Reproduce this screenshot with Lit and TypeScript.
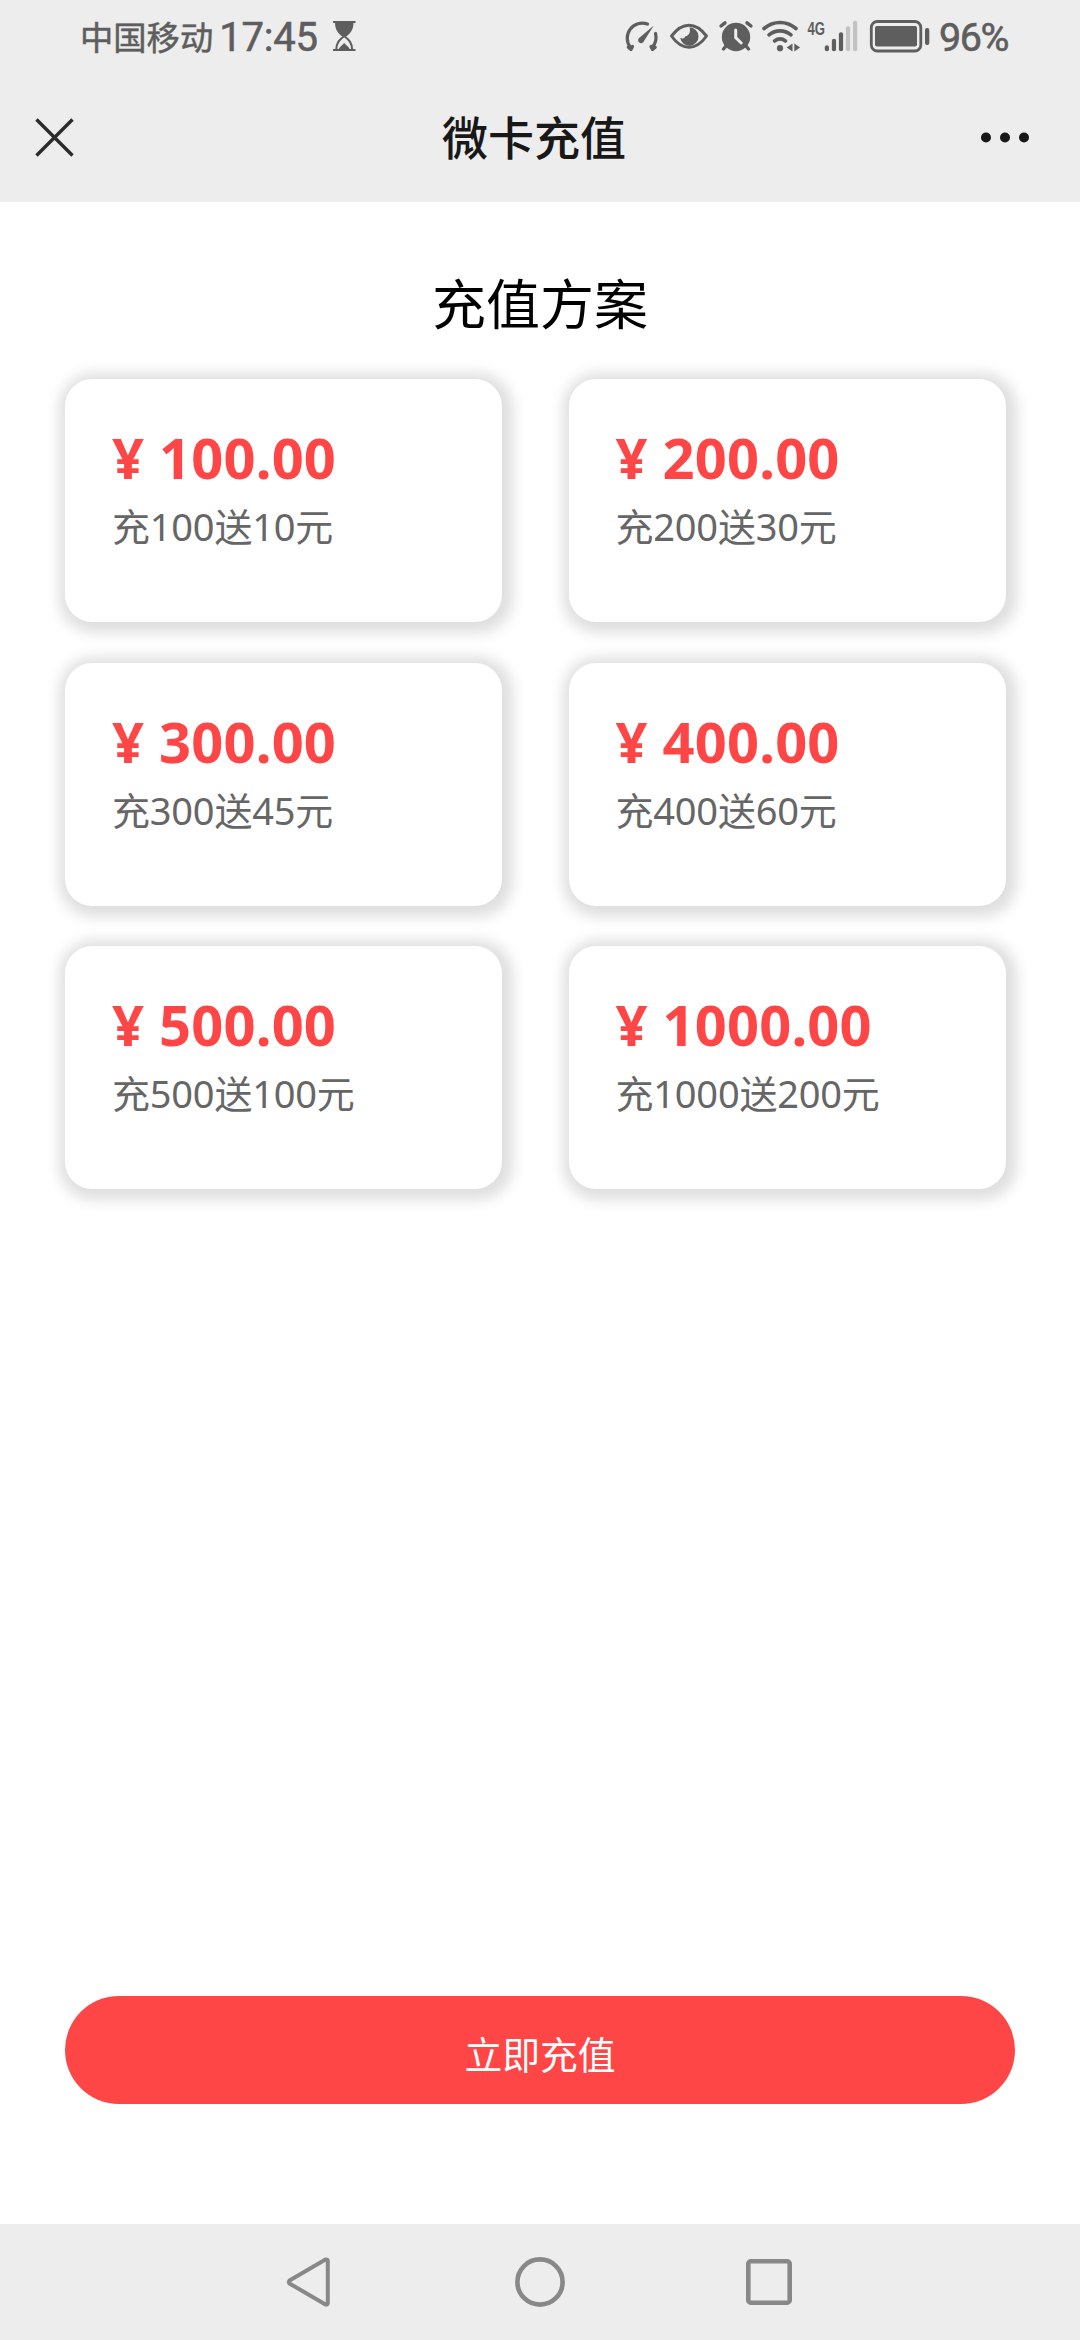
import { LitElement, html, css, svg } from "lit";
import { customElement, property } from "lit/decorators.js";

interface Plan {
  price: string;
  note: string;
}

const PLANS: Plan[] = [
  { price: "100.00", note: "充100送10元" },
  { price: "200.00", note: "充200送30元" },
  { price: "300.00", note: "充300送45元" },
  { price: "400.00", note: "充400送60元" },
  { price: "500.00", note: "充500送100元" },
  { price: "1000.00", note: "充1000送200元" },
];

// Heights of the signal bars, and whether each one is lit.
const BARS = [
  { h: 6, on: true },
  { h: 12.5, on: true },
  { h: 19, on: true },
  { h: 25, on: false },
  { h: 30.5, on: false },
];

@customElement("status-bar")
class StatusBar extends LitElement {
  static styles = css`
    :host {
      display: flex;
      height: 74px;
      padding: 0 72px 0 80px;
      align-items: center;
      justify-content: space-between;
      color: #5e5e5e;
      box-sizing: border-box;
    }
    .group {
      display: flex;
      align-items: center;
      height: 74px;
    }
    .carrier {
      font: 400 33.3px/74px "Noto Sans CJK SC", sans-serif;
      -webkit-text-stroke: 0.5px #5e5e5e;
      height: 76px;
    }
    .time {
      font: 400 40px/74px Roboto, sans-serif;
      -webkit-text-stroke: 0.6px #5e5e5e;
      letter-spacing: -0.2px;
      margin-left: 6px;
      width: 99px;
      height: 72px;
    }
    .percent {
      font: 400 39.5px/74px Roboto, sans-serif;
      -webkit-text-stroke: 0.6px #5e5e5e;
      letter-spacing: -1.4px;
      width: 69px;
      height: 72px;
    }
    .hourglass {
      margin-left: 14px;
    }
    svg {
      display: block;
      height: 74px;
      flex: none;
    }
    .net {
      font: 700 19px "Liberation Sans", sans-serif;
    }
  `;

  render() {
    return html`
      <div class="group">
        <span class="carrier">中国移动</span>
        <span class="time">17:45</span>
        <svg class="hourglass" width="24" viewBox="332 0 24 74" fill="#5e5e5e">
          <path d="M333 21h22.5v2H333zM333 49h22.5v2H333z" />
          <path d="M335 22h18.500c0 8-3 11-7.300 14.500h-4C338 33 335 30 335 22z" />
          <path
            d="M336.200 50c0-7 3-10 8-14 5 4 8 7 8 14"
            fill="none"
            stroke="#5e5e5e"
            stroke-width="2"
          />
          <path d="M338.500 50c1-3.500 3.500-4.500 5.700-7 2.200 2.500 4.800 3.500 5.800 7z" />
        </svg>
      </div>
      <div class="group">
        <svg width="45" viewBox="620 0 45 74" fill="none" stroke="#5e5e5e" stroke-width="3.200">
          <path d="M647.500 24.100A15 15 0 0 0 630.500 47.500" stroke-linecap="round" />
          <path d="M628.300 47.300l2.700 2.200 1.500-3" stroke-linejoin="round" stroke-linecap="round" />
          <path d="M655.500 33.500A15 15 0 0 1 652.500 47" stroke-linecap="round" />
          <path d="M655.200 47.300l-2.700 2.200-1.500-3" stroke-linejoin="round" stroke-linecap="round" />
          <path d="M653.800 25.500L644 41a3 3 0 1 1-4.600-3.300z" fill="#5e5e5e" stroke="none" />
        </svg>
        <svg width="50" viewBox="665 0 50 74">
          <path
            d="M671.500 36C676 30 682 25.200 689 25.200S702 30 706.500 36C702 42.500 696 47.200 689 47.200S676 42.500 671.500 36z"
            fill="none"
            stroke="#5e5e5e"
            stroke-width="3"
            stroke-linejoin="round"
          />
          <path
            d="M689.500 27.300a9.200 9.200 0 1 1-9.300 10.500c2 1.200 4.300.6 5-1.400 3.500-.5 6-4.400 4.300-9.100z"
            fill="#5e5e5e"
          />
        </svg>
        <svg width="42" viewBox="715 0 42 74">
          <circle cx="736" cy="37" r="14.200" fill="#5e5e5e" />
          <path
            d="M721 26l4-3.200M751 26l-4-3.200M726 46l-2.500 3M746 46l2.500 3"
            stroke="#5e5e5e"
            stroke-width="3.400"
            stroke-linecap="round"
          />
          <path
            d="M735.700 30v7.600l5.500 5.400"
            fill="none"
            stroke="#ededed"
            stroke-width="3"
            stroke-linecap="round"
          />
        </svg>
        <svg width="48" viewBox="757 0 48 74" fill="none" stroke="#5e5e5e">
          <g stroke-width="3.600" stroke-linecap="round">
            <path d="M764 28.500c9.500-8 22.500-8 32 0" />
            <path d="M769 34.800c6.600-5.300 15.400-5.300 22 0" />
            <path d="M774.500 41c3.500-2.600 7.500-2.600 11 0" />
          </g>
          <circle cx="780" cy="48.200" r="3.100" fill="#5e5e5e" stroke="none" />
          <path d="M792.500 43.500v8l-5.800-4zM794.300 43.500v8l5.800-4z" fill="#5e5e5e" stroke="none" />
        </svg>
        <svg width="58" viewBox="805 0 58 74">
          <text
            class="net"
            x="807.500"
            y="34.500"
            fill="#5e5e5e"
            textLength="17.500"
            lengthAdjust="spacingAndGlyphs"
          >4G</text>
          ${BARS.map(
            (b, i) => svg`<rect
              x=${824.8 + i * 7.05} y=${51.2 - b.h} width="4.200" height=${b.h} rx="2"
              fill=${b.on ? "#5e5e5e" : "#c2c2c2"} />`
          )}
        </svg>
        <svg width="76" viewBox="863 0 76 74" fill="#5e5e5e">
          <rect
            x="871.300"
            y="21.500"
            width="49.500"
            height="29.500"
            rx="6"
            fill="none"
            stroke="#5e5e5e"
            stroke-width="2.800"
          />
          <rect x="875" y="26" width="42" height="20.500" rx="2" />
          <rect x="925" y="28" width="4.300" height="17" rx="2" />
        </svg>
        <span class="percent">96%</span>
      </div>
    `;
  }
}

@customElement("plan-card")
class PlanCard extends LitElement {
  @property() price = "";
  @property() note = "";

  static styles = css`
    :host {
      display: block;
      height: 243px;
      box-sizing: border-box;
      padding: 45px 47px 0;
      border-radius: 27px;
      background: #fff;
      box-shadow: 2.7px 2.7px 13.5px 8px #dfdfdf;
      white-space: nowrap;
    }
    .price {
      color: #ff4646;
      font: 700 56px/66px "Noto Sans", sans-serif;
      letter-spacing: 0.2px;
    }
    .note {
      color: #666;
      font: 400 38px/54px "Noto Sans", "Noto Sans CJK SC", sans-serif;
      letter-spacing: -0.2px;
      margin-top: 9px;
    }
  `;

  render() {
    return html`
      <div class="price">¥ ${this.price}</div>
      <div class="note">${this.note}</div>
    `;
  }
}

@customElement("app-root")
class AppRoot extends LitElement {
  static styles = css`
    :host {
      display: flex;
      flex-direction: column;
      width: 1080px;
      height: 2340px;
      background: #fff;
      font-family: "Noto Sans CJK SC", sans-serif;
      overflow: hidden;
    }
    .top {
      background: #ededed;
      height: 202px;
      flex: none;
    }
    .title-bar {
      display: grid;
      grid-template-columns: 100px 1fr 112px;
      align-items: center;
      height: 128px;
    }
    .title {
      text-align: center;
      color: #181818;
      font-size: 46px;
      font-weight: 500;
      line-height: 122px;
      height: 128px;
    }
    svg {
      display: block;
    }
    main {
      flex: 1;
      display: flex;
      flex-direction: column;
      padding: 0 65px 120px;
    }
    h1 {
      margin: 65px 0 0;
      font-size: 54px;
      line-height: 70px;
      font-weight: 400;
      color: #000;
      text-align: center;
    }
    .plans {
      display: grid;
      grid-template-columns: 437px 437.5px;
      column-gap: 66.500px;
      row-gap: 40.500px;
      margin-top: 42px;
    }
    .pay {
      margin-top: auto;
      height: 108px;
      border: 0;
      padding: 6px 0 0;
      border-radius: 54px;
      background: #ff4646;
      color: #fff;
      font: 400 37.800px/100px "Noto Sans CJK SC", sans-serif;
    }
    .nav {
      flex: none;
      height: 116px;
      background: #ededed;
      display: flex;
      justify-content: center;
      align-items: center;
      gap: 169px;
    }
  `;

  render() {
    return html`
      <div class="top">
        <status-bar></status-bar>
        <div class="title-bar">
          <svg width="100" height="128" viewBox="0 74 100 128">
            <path d="M36.500 119.500l36 36M72.500 119.500l-36 36" stroke="#2b2b2b" stroke-width="3.400" />
          </svg>
          <div class="title">微卡充值</div>
          <svg width="112" height="128" viewBox="968 74 112 128" fill="#181818">
            <circle cx="986" cy="137.500" r="5" />
            <circle cx="1005" cy="137.500" r="5" />
            <circle cx="1024" cy="137.500" r="5" />
          </svg>
        </div>
      </div>
      <main>
        <h1>充值方案</h1>
        <div class="plans">
          ${PLANS.map((p) => html`<plan-card .price=${p.price} .note=${p.note}></plan-card>`)}
        </div>
        <button class="pay">立即充值</button>
      </main>
      <div class="nav">
        <svg width="60" height="60" viewBox="281 2252 60 60">
          <path
            d="M289.500 2280.500L325.500 2259.500Q327.800 2259 327.800 2261V2303Q327.800 2305 325.500 2304.500L289.500 2283.500Q288.200 2282 289.500 2280.500z"
            fill="none"
            stroke="#888"
            stroke-width="4"
            stroke-linejoin="round"
          />
        </svg>
        <svg width="60" height="60" viewBox="510 2252 60 60">
          <circle cx="540" cy="2282" r="22.600" fill="none" stroke="#888" stroke-width="4.600" />
        </svg>
        <svg width="60" height="60" viewBox="739 2252 60 60">
          <rect
            x="748.300"
            y="2261.300"
            width="41.400"
            height="41.400"
            rx="2.500"
            fill="none"
            stroke="#888"
            stroke-width="4.600"
          />
        </svg>
      </div>
    `;
  }
}
